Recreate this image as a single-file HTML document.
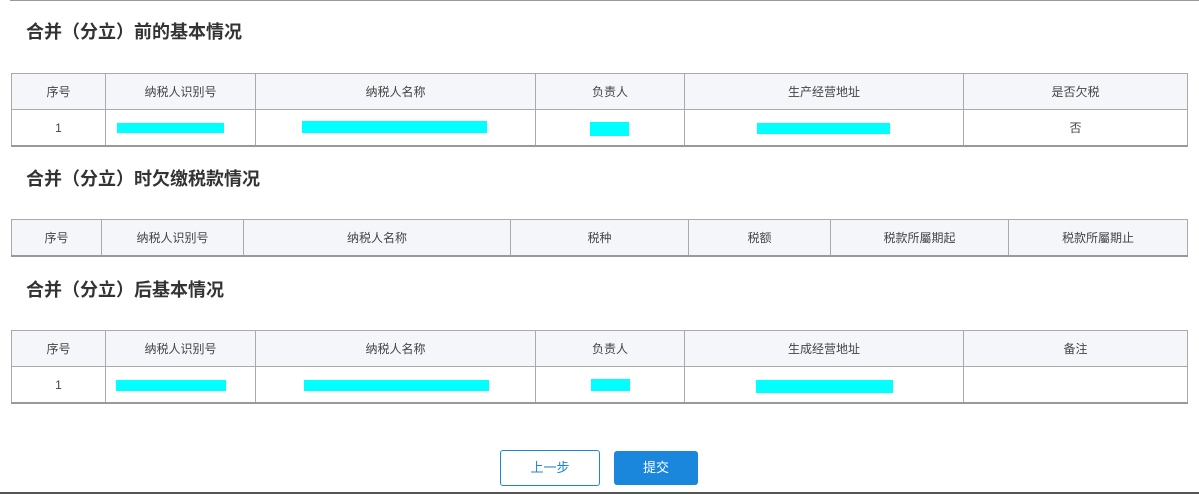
<!DOCTYPE html><html><head><meta charset="utf-8"><style>
body{margin:0;width:1199px;height:494px;position:relative;background:#fff;font-family:"Liberation Sans","Noto Sans CJK SC",sans-serif;overflow:hidden}
.a{position:absolute}
h2{position:absolute;left:26px;margin:0;font-size:18px;font-weight:bold;color:#333;line-height:24px}
table{position:absolute;left:11px;width:1177px;border-collapse:collapse;font-size:12px;color:#444;table-layout:fixed;border-bottom:2px solid #999}
td{border:1px solid #aaa;text-align:center;height:35px;padding:0;position:relative}
tr.h td{background:#f5f6fa}
.c{position:absolute;background:#00ffff}
</style></head><body>
<div class="a" style="left:10px;top:0;width:1189px;height:1px;background:#999"></div>
<h2 style="top:20px">合并（分立）前的基本情况</h2>
<table style="top:73px"><colgroup><col style="width:94px"><col style="width:150px"><col style="width:280px"><col style="width:149px"><col style="width:279px"><col></colgroup>
<tr class="h"><td>序号</td><td>纳税人识别号</td><td>纳税人名称</td><td>负责人</td><td>生产经营地址</td><td>是否欠税</td></tr>
<tr><td>1</td><td></td><td></td><td></td><td></td><td>否</td></tr></table>
<div class="c" style="left:117px;top:123px;width:107px;height:10px"></div>
<div class="c" style="left:302px;top:121px;width:185px;height:12px"></div>
<div class="c" style="left:590px;top:122px;width:39px;height:14px"></div>
<div class="c" style="left:757px;top:123px;width:133px;height:11px"></div>
<h2 style="top:167px">合并（分立）时欠缴税款情况</h2>
<table style="top:219px"><colgroup><col style="width:90px"><col style="width:142px"><col style="width:267px"><col style="width:178px"><col style="width:142px"><col style="width:178px"><col></colgroup>
<tr class="h"><td>序号</td><td>纳税人识别号</td><td>纳税人名称</td><td>税种</td><td>税额</td><td>税款所屬期起</td><td>税款所屬期止</td></tr></table>
<h2 style="top:278px">合并（分立）后基本情况</h2>
<table style="top:330px"><colgroup><col style="width:94px"><col style="width:150px"><col style="width:280px"><col style="width:149px"><col style="width:279px"><col></colgroup>
<tr class="h"><td>序号</td><td>纳税人识别号</td><td>纳税人名称</td><td>负责人</td><td>生成经营地址</td><td>备注</td></tr>
<tr><td>1</td><td></td><td></td><td></td><td></td><td></td></tr></table>
<div class="c" style="left:116px;top:380px;width:110px;height:11px"></div>
<div class="c" style="left:304px;top:380px;width:185px;height:11px"></div>
<div class="c" style="left:591px;top:379px;width:39px;height:12px"></div>
<div class="c" style="left:756px;top:380px;width:137px;height:13px"></div>
<div class="a" style="left:500px;top:450px;width:98px;height:34px;border:1px solid #1a87dd;border-radius:3px;color:#1a87dd;font-size:13px;text-align:center;line-height:34px">上一步</div>
<div class="a" style="left:614px;top:451px;width:84px;height:34px;background:#1a87dd;border-radius:3px;color:#fff;font-size:13px;text-align:center;line-height:34px">提交</div>
<div class="a" style="left:0;top:492px;width:1199px;height:2px;background:#555"></div>
</body></html>
